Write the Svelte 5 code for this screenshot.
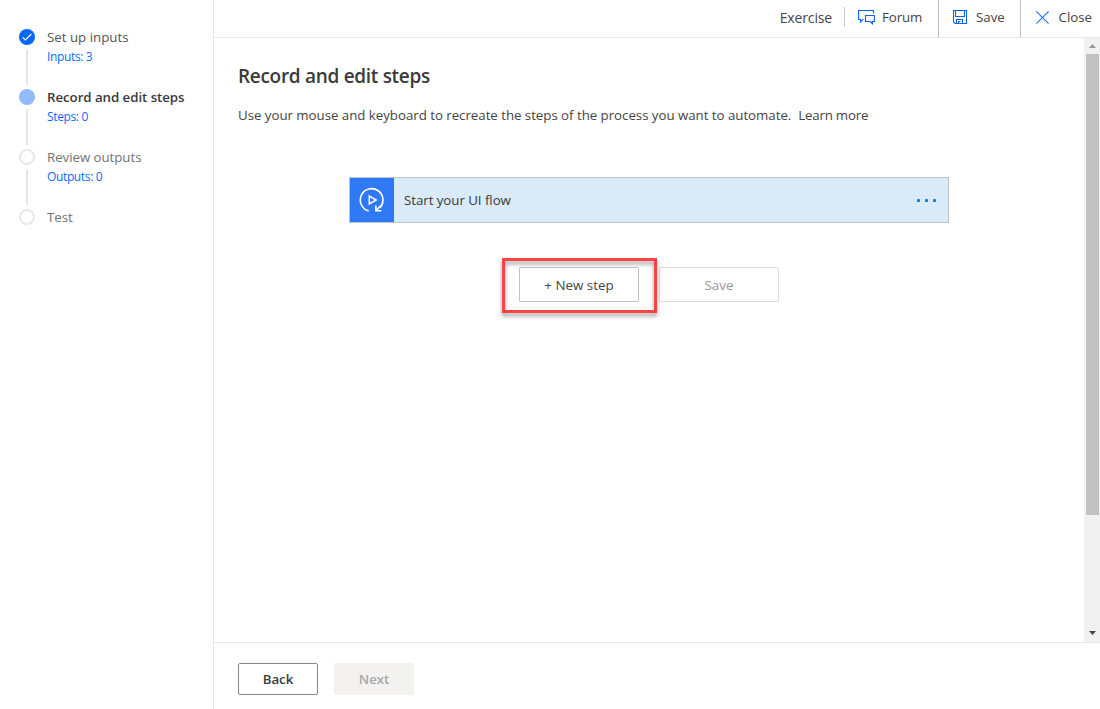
<script>
  const steps = [
    { title: 'Set up inputs', detail: 'Inputs: 3', state: 'done' },
    { title: 'Record and edit steps', detail: 'Steps: 0', state: 'current' },
    { title: 'Review outputs', detail: 'Outputs: 0', state: 'todo' },
    { title: 'Test', detail: '', state: 'todo' }
  ];
</script>

<div class="app">
  <nav class="sidebar">
    {#each steps as step, i}
      <div class="step {step.state}">
        <div class="rail">
          <span class="dot">
            {#if step.state === 'done'}
              <svg width="16" height="16" viewBox="0 0 16 16"><path d="M3.6 8.3l2.8 2.7 6-6" fill="none" stroke="#fff" stroke-width="1.1" /></svg>
            {/if}
          </span>
          {#if i < steps.length - 1}<span class="line"></span>{/if}
        </div>
        <div class="label">
          <div class="name">{step.title}</div>
          {#if step.detail}<div class="detail">{step.detail}</div>{/if}
        </div>
      </div>
    {/each}
  </nav>

  <div class="main">
    <header>
      <span class="exercise">Exercise</span>
      <div class="action forum">
        <svg width="17" height="16" viewBox="0 0 17 16" fill="none" stroke="#0b62f0" stroke-width="1.1">
          <path d="M5.5 10.5H4.9L2.5 12.9V10.5H.6V1.5H15.5V4.5" />
          <path d="M7.5 6.5H16.4V12.5H14.4V14.6L12.2 12.5H7.5Z" />
        </svg>
        <span>Forum</span>
      </div>
      <div class="action save">
        <svg width="14" height="14" viewBox="0 0 14 14" fill="none" stroke="#0b62f0" stroke-width="1.1">
          <path d="M.5 .5H13.5V13.5H2L.5 12Z" />
          <path d="M2.5 .5V6.5H11.5V.5M3.5 13.5V9.5H9.5V13.5M5.5 13.5V11.5H7.5" />
        </svg>
        <span>Save</span>
      </div>
      <div class="action close">
        <svg width="13" height="13" viewBox="0 0 13 13" fill="none" stroke="#2474f4" stroke-width="1.15"><path d="M.4 .4L12.6 12.6M12.6 .4L.4 12.6" /></svg>
        <span>Close</span>
      </div>
    </header>

    <div class="body">
      <div class="content">
        <h1>Record and edit steps</h1>
        <p><span>Use your mouse and keyboard to recreate the steps of the process you want to automate.</span><span class="learn">Learn more</span></p>
        <div class="card">
          <div class="badge">
            <svg width="26" height="28" viewBox="0 0 26 28" fill="none" stroke="#fff" stroke-width="1.6">
              <path d="M9.7 24.9A11.3 11.3 0 1 1 20.6 22" />
              <path d="M16.9 19.4V24.7H22.4M17 24.5L22.8 18.7" />
              <path d="M10.3 10V18L17.2 14Z" stroke-width="1.5" />
            </svg>
          </div>
          <span class="card-title">Start your UI flow</span>
          <span class="more"><i></i><i></i><i></i></span>
        </div>
        <div class="buttons">
          <div class="new-wrap">
            <button class="btn">+ New step</button>
            <div class="highlight"></div>
          </div>
          <button class="btn disabled">Save</button>
        </div>
      </div>
      <div class="scroll">
        <svg width="7" height="4" viewBox="0 0 7 4"><path d="M3.5 0L7 4H0Z" fill="#999" /></svg>
        <div class="thumb"></div>
        <svg width="7" height="4" viewBox="0 0 7 4"><path d="M3.5 4L7 0H0Z" fill="#444" /></svg>
      </div>
    </div>

    <footer>
      <button class="nav-btn">Back</button>
      <button class="nav-btn next">Next</button>
    </footer>
  </div>
</div>

<style>
  :global(body) { margin: 0; background: #fff; overflow: hidden; }
  * { box-sizing: border-box; }
  .app {
    display: flex;
    width: 1100px;
    height: 709px;
    font: 13.3px/20px "Open Sans", "Noto Sans", sans-serif;
    color: #454443;
    white-space: nowrap;
  }
  .sidebar { width: 214px; border-right: 1px solid #e4e4e4; padding: 27px 0 0 19px; }
  .step { display: flex; height: 60px; gap: 12px; }
  .rail { width: 16px; display: flex; flex-direction: column; align-items: center; padding-top: 2px; gap: 4px; }
  .dot { width: 16px; height: 16px; border-radius: 50%; flex: none; }
  .dot svg { display: block; }
  .done .dot { background: #0668fb; }
  .current .dot { background: #91bbfc; }
  .todo .dot { border: 2px solid #e8e8e8; }
  .line { width: 2px; height: 36px; background: #e6e6e6; }
  .done .name { color: #555; }
  .current .name { font-weight: 600; color: #3a3a3a; letter-spacing: -0.06px; }
  .todo .name { color: #737373; letter-spacing: -0.05px; }
  .detail { font-size: 12px; line-height: 18px; color: #0b6cff; letter-spacing: -0.36px; padding-top: 1px; }

  .main { flex: 1; display: flex; flex-direction: column; min-width: 0; }
  header { height: 38px; flex: none; border-bottom: 1px solid #e8e8e8; display: flex; justify-content: flex-end; }
  .exercise { height: 20px; line-height: 21px; margin-top: 7px; padding-right: 12px; border-right: 1px solid #c8c8c8; font-size: 14px; letter-spacing: -0.15px; }
  .action { height: 37px; display: flex; align-items: center; padding-bottom: 3px; }
  .forum { width: 94px; padding-left: 13px; gap: 7px; border-right: 1px solid #c0c0c0; letter-spacing: -0.1px; }
  .save { width: 82px; padding-left: 14px; gap: 9px; border-right: 1px solid #c0c0c0; }
  .close { width: 79px; padding-left: 15px; gap: 9.5px; }

  .body { flex: 1; display: flex; min-height: 0; }
  .content { flex: 1; padding: 24px 0 0 24px; }
  h1 { margin: 0; font-size: 19px; line-height: 28px; font-weight: 600; letter-spacing: -0.3px; color: #3b3a39; }
  p { margin: 15px 0 0; height: 20px; display: flex; gap: 7px; letter-spacing: -0.035px; }
  .learn { letter-spacing: -0.22px; }
  .card { margin: 52px 0 0 111px; width: 600px; height: 46px; border: 1px solid #c0c4c8; background: #d9eaf8; display: flex; align-items: center; color: #3a3a3a; }
  .badge { width: 44px; height: 44px; background: #3079f5; display: flex; align-items: center; justify-content: center; }
  .card-title { margin-left: 10px; flex: 1; letter-spacing: -0.05px; }
  .more { display: flex; gap: 5px; margin-right: 12px; padding-top: 1px; }
  .more i { width: 3px; height: 3px; border-radius: 1px; background: #0c78d7; }
  .buttons { display: flex; gap: 20px; margin: 44px 0 0 281px; }
  .new-wrap { position: relative; }
  button { font-family: inherit; padding: 0; }
  .btn { display: block; width: 120px; height: 35px; background: #fff; border: 1px solid #c4c4c4; border-radius: 1px; font-size: 13.4px; color: #444; }
  .disabled { border-color: #dedede; color: #979797; }
  .highlight { position: absolute; left: -17px; top: -9px; width: 155px; height: 55px; border: 3px solid #fa4343; filter: drop-shadow(0 3px 2px rgba(0, 0, 0, 0.4)); }
  .scroll { width: 16px; background: #f1f1f1; display: flex; flex-direction: column; align-items: center; padding: 6px 0 7px; }
  .thumb { width: 13px; height: 461px; margin: 6px 0 auto 1px; background: #c1c1c1; }
  footer { height: 67px; flex: none; border-top: 1px solid #e6e6e6; padding: 20px 0 0 24px; display: flex; gap: 16px; }
  .nav-btn { width: 80px; height: 32px; border-radius: 2px; font-size: 13.3px; font-weight: 600; color: #3a3a3a; background: #fff; border: 1px solid #8a8886; letter-spacing: -0.1px; }
  .next { background: #f3f2f1; border-color: #f3f2f1; color: #a8a6a4; }
</style>
